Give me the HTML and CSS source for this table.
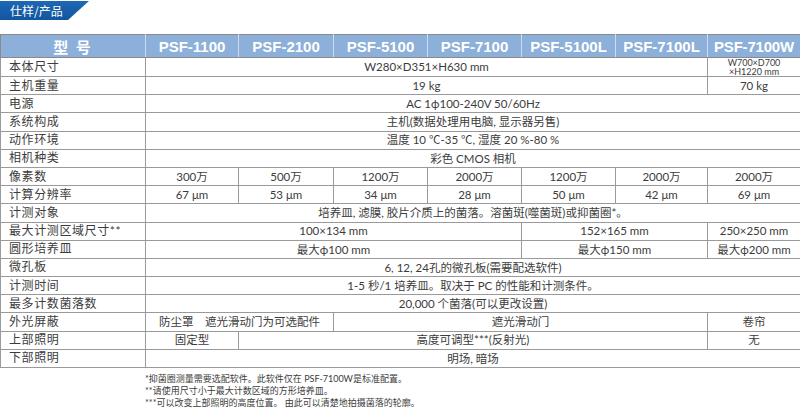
FILE: index.html
```html
<!DOCTYPE html>
<html lang="zh-CN">
<head>
<meta charset="utf-8">
<title>仕样/产品</title>
<link rel="stylesheet" href="styles.css">
</head>
<body>
<div class="tab"><span>仕样/产品</span></div>
<table class="spec">
  <colgroup>
    <col class="c-label"><col class="c93"><col class="c95"><col class="c94"><col class="c94"><col class="c94"><col class="c92"><col class="c93">
  </colgroup>
  <thead>
    <tr>
      <th class="th-label">型&nbsp;号</th>
      <th>PSF-1100</th><th>PSF-2100</th><th>PSF-5100</th><th>PSF-7100</th><th>PSF-5100L</th><th>PSF-7100L</th><th>PSF-7100W</th>
    </tr>
  </thead>
  <tbody>
    <tr class="r-first"><td class="lbl">本体尺寸</td><td colspan="6">W280×D351×H630 mm</td><td class="small">W700×D700<br>×H1220 mm</td></tr>
    <tr><td class="lbl">主机重量</td><td colspan="6">19 kg</td><td>70 kg</td></tr>
    <tr><td class="lbl">电源</td><td colspan="7">AC 1ϕ100-240V 50/60Hz</td></tr>
    <tr><td class="lbl">系统构成</td><td colspan="7">主机(数据处理用电脑, 显示器另售)</td></tr>
    <tr><td class="lbl">动作环境</td><td colspan="7">温度 10 ℃-35 ℃, 湿度 20 %-80 %</td></tr>
    <tr><td class="lbl">相机种类</td><td colspan="7">彩色 CMOS 相机</td></tr>
    <tr><td class="lbl">像素数</td><td>300万</td><td>500万</td><td>1200万</td><td>2000万</td><td>1200万</td><td>2000万</td><td>2000万</td></tr>
    <tr><td class="lbl">计算分辨率</td><td>67 μm</td><td>53 μm</td><td>34 μm</td><td>28 μm</td><td>50 μm</td><td>42 μm</td><td>69 μm</td></tr>
    <tr><td class="lbl">计测对象</td><td colspan="7">培养皿, 滤膜, 胶片介质上的菌落。溶菌斑(噬菌斑)或抑菌圈*。</td></tr>
    <tr><td class="lbl">最大计测区域尺寸**</td><td colspan="4">100×134 mm</td><td colspan="2">152×165 mm</td><td>250×250 mm</td></tr>
    <tr><td class="lbl">圆形培养皿</td><td colspan="4">最大ϕ100 mm</td><td colspan="2">最大ϕ150 mm</td><td>最大ϕ200 mm</td></tr>
    <tr><td class="lbl">微孔板</td><td colspan="7">6, 12, 24孔的微孔板(需要配选软件)</td></tr>
    <tr><td class="lbl">计测时间</td><td colspan="7">1-5 秒/1 培养皿。取决于 PC 的性能和计测条件。</td></tr>
    <tr><td class="lbl">最多计数菌落数</td><td colspan="7">20,000 个菌落(可以更改设置)</td></tr>
    <tr><td class="lbl">外光屏蔽</td><td colspan="2">防尘罩　遮光滑动门为可选配件</td><td colspan="4">遮光滑动门</td><td>卷帘</td></tr>
    <tr><td class="lbl">上部照明</td><td>固定型</td><td colspan="5">高度可调型***(反射光)</td><td>无</td></tr>
    <tr><td class="lbl">下部照明</td><td colspan="7">明场, 暗场</td></tr>
  </tbody>
</table>
<div class="notes">
  <p>*抑菌圈测量需要选配软件。此软件仅在 PSF-7100W是标准配置。</p>
  <p>**请使用尺寸小于最大计数区域的方形培养皿。</p>
  <p>***可以改变上部照明的高度位置。 由此可以清楚地拍摄菌落的轮廓。</p>
</div>
</body>
</html>
```
FILE: styles.css
```css
html, body {
  margin: 0;
  padding: 0;
  background: #ffffff;
}
body {
  font-family: Lato, "Noto Sans CJK SC", sans-serif;
  color: #3c3c3c;
  width: 800px;
}
.tab {
  margin-top: 1px;
  width: 89px;
  height: 19px;
  background: linear-gradient(180deg, #1d68b5 0%, #12559f 100%);
  clip-path: polygon(0 0, 89px 0, 68px 100%, 0 100%);
  display: flex;
  align-items: center;
}
.tab span {
  color: #ffffff;
  font-family: "Noto Sans CJK SC", sans-serif;
  font-size: 12px;
  padding-left: 10px;
  line-height: 1;
}
.spec {
  margin-top: 14px;
  width: 800px;
  table-layout: fixed;
  border-collapse: collapse;
  font-size: 11.5px;
}
.c-label { width: 145px; }
.c93 { width: 93px; }
.c95 { width: 95px; }
.c94 { width: 94px; }
.c92 { width: 92px; }
.spec th {
  height: 22px;
  padding: 0;
  background: #8cb0da;
  color: #ffffff;
  font-family: "Liberation Sans", "Noto Sans CJK SC", sans-serif;
  font-weight: bold;
  font-size: 15px;
  line-height: 1;
  white-space: nowrap;
  border: 1px solid #8a8a8a;
  border-left-color: #cddcef;
  border-right-color: #cddcef;
  text-align: center;
}
.spec th.th-label {
  border-left-color: #8a8a8a;
  font-family: "Noto Sans CJK SC", sans-serif;
  letter-spacing: 2px;
}
.spec th:last-child {
  border-right-color: #8a8a8a;
  letter-spacing: -0.2px;
}
.spec td {
  height: 17.2px;
  padding: 0;
  border: 1px solid #9a9a9a;
  text-align: center;
  line-height: 1;
  white-space: nowrap;
}
.spec tr.r-first td {
  height: 18px;
}
.spec td.lbl {
  text-align: left;
  padding-left: 8px;
  letter-spacing: 0.6px;
  font-size: 12px;
}
.spec td.small {
  font-size: 9px;
  line-height: 9px;
}
.notes {
  margin-top: 5px;
  padding-left: 145px;
  font-size: 9px;
  color: #3c3c3c;
}
.notes p {
  margin: 0;
  line-height: 12px;
}
```
